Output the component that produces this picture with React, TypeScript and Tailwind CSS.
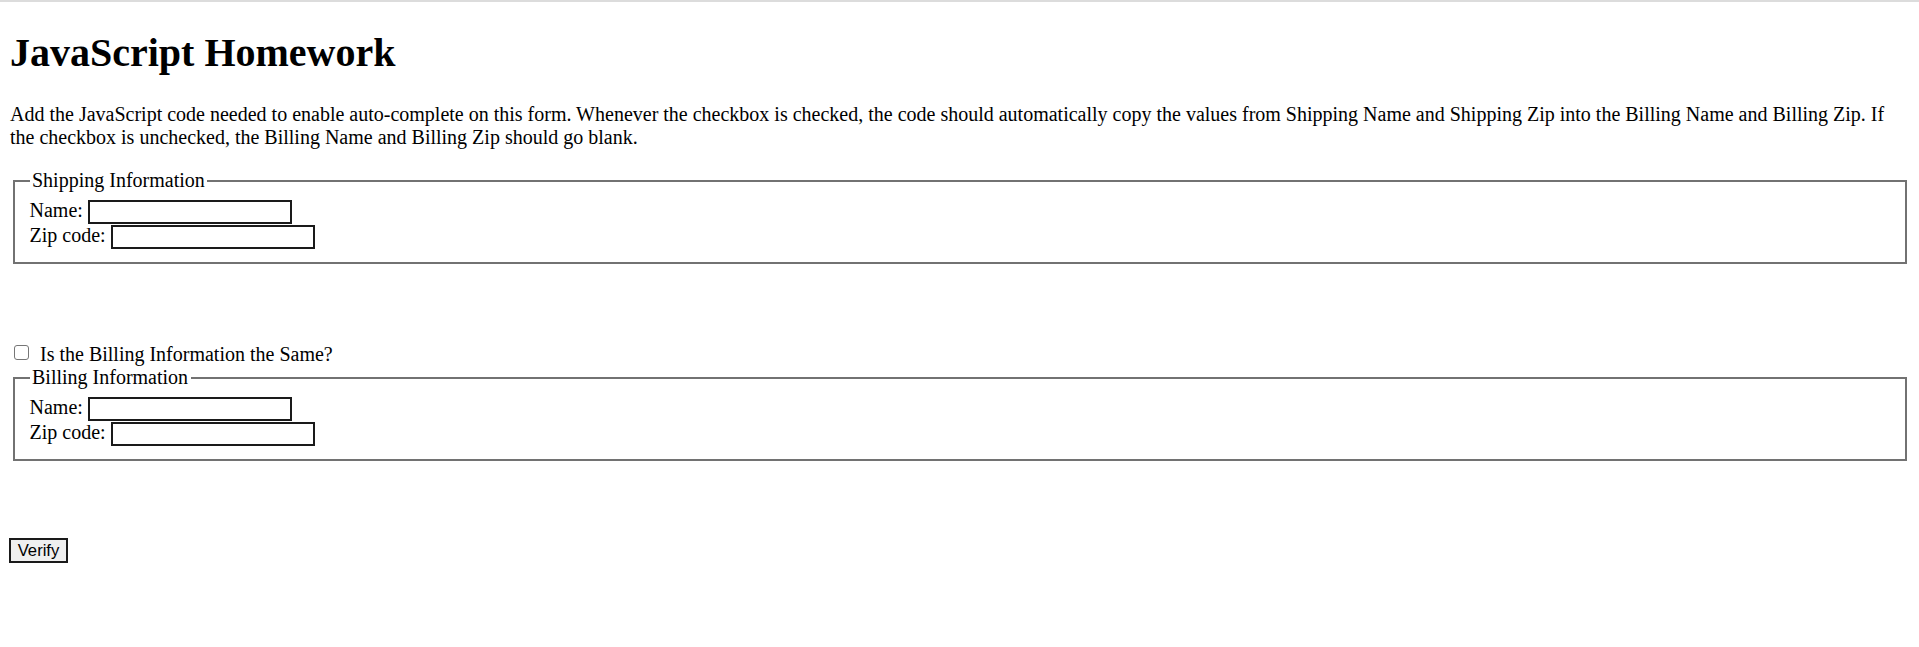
import React from "react";

function InfoFieldset({ legend }: { legend: string }) {
  return (
    <fieldset className="mx-[2.5px] min-w-0 border-2 border-[#727272] px-[15px] pt-[7px] pb-[13px]">
      <legend className="px-[2.5px] leading-[23px]">{legend}</legend>
      <div className="leading-[23px]">
        Name:{" "}
        <input
          type="text"
          className="h-[24px] w-[204px] border-2 border-[#1a1a1a] bg-white px-[2px] align-baseline font-['Liberation_Sans',Arial,sans-serif] text-[16.67px] outline-none"
        />
        <br />
        Zip code:{" "}
        <input
          type="text"
          className="h-[24px] w-[204px] border-2 border-[#1a1a1a] bg-white px-[2px] align-baseline font-['Liberation_Sans',Arial,sans-serif] text-[16.67px] outline-none"
        />
      </div>
    </fieldset>
  );
}

export default function App() {
  return (
    <div className="min-h-[647px] bg-white font-['Liberation_Serif','Times_New_Roman',serif] text-[20px] leading-[23px] text-black">
      <div className="h-[2px] bg-[#dcdcdc]" />
      <div className="px-[10px]">
        <h1 className="pt-[28px] text-[40px] font-bold leading-[46px]">JavaScript Homework</h1>
        <p className="mt-[27px]">
          Add the JavaScript code needed to enable auto-complete on this form. Whenever the checkbox is checked, the code should automatically copy the values from Shipping Name and Shipping Zip into the Billing Name and Billing Zip. If the checkbox is unchecked, the Billing Name and Billing Zip should go blank.
        </p>
        <div className="mt-[20px]">
          <InfoFieldset legend="Shipping Information" />
        </div>
        <div className="mt-[79px] leading-[23px]">
          <input
            type="checkbox"
            className="ml-[4px] mr-[6px] h-[15px] w-[15px] appearance-none rounded-[3px] border border-[#767676] bg-white align-[1px]"
          />{" "}
          Is the Billing Information the Same?
        </div>
        <InfoFieldset legend="Billing Information" />
        <div className="mt-[77px] flex">
          <button
            type="button"
            className="h-[25px] w-[59px] -ml-[1px] border-2 border-[#1a1a1a] bg-[#efefef] font-['Liberation_Sans',Arial,sans-serif] text-[16.67px] leading-[19px] text-black"
          >
            Verify
          </button>
        </div>
      </div>
    </div>
  );
}
